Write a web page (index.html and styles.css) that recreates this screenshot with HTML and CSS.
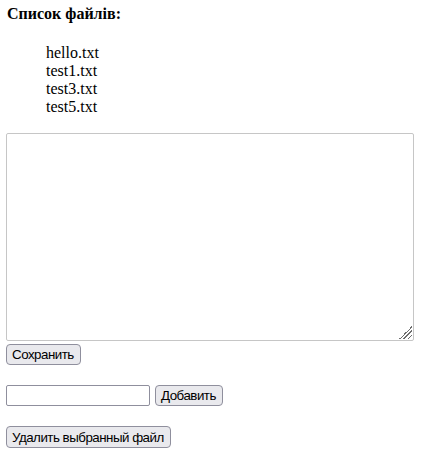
FILE: index.html
```html
<!DOCTYPE html>
<html lang="ru">
<head>
<meta charset="utf-8">
<title>Файлы</title>
<link rel="stylesheet" href="styles.css">
</head>
<body>
<div class="title">Список файлів:</div>
<ul class="files">
  <li>hello.txt</li>
  <li>test1.txt</li>
  <li>test3.txt</li>
  <li>test5.txt</li>
</ul>
<div class="editor">
  <textarea class="content"></textarea>
  <div class="row"><button class="btn">Сохранить</button></div>
</div>
<div class="row add"><input class="name" type="text"><button class="btn">Добавить</button></div>
<div class="row del"><button class="btn">Удалить выбранный файл</button></div>
</body>
</html>
```

FILE: styles.css
```css
html, body {
  background: #ffffff;
}
body {
  margin: 5px 8px 8px 6px;
  font-family: "Liberation Serif", "Times New Roman", serif;
  font-size: 16px;
  color: #000;
}
.title {
  font-weight: bold;
  padding-left: 1px;
}
.files {
  list-style: none;
  margin: 21px 0 17px;
  padding-left: 40px;
}
.editor {
  display: flex;
  flex-direction: column;
  align-items: flex-start;
  gap: 3px;
}
.content {
  box-sizing: border-box;
  width: 408px;
  height: 208px;
  margin: 0;
  border: 1px solid #c6c6c6;
  border-radius: 2px;
  resize: none;
  background:
    linear-gradient(135deg, #fff 50%, transparent 50%) right 1px bottom 1px / 13px 13px no-repeat,
    repeating-linear-gradient(135deg, #6e6e6e 0 1px, transparent 1px 3px) right 1px bottom 1px / 13px 13px no-repeat,
    #fff;
}
.row {
  display: flex;
  align-items: center;
  gap: 5px;
}
.add {
  margin-top: 20px;
}
.del {
  margin-top: 20px;
}
.btn {
  font-family: "Liberation Sans", Arial, sans-serif;
  font-size: 13.333px;
  letter-spacing: -0.5px;
  color: #000;
  background: #e9e9ed;
  border: 1px solid #8f8f9d;
  border-radius: 4px;
  padding: 2px 6px 2px 5px;
  height: 21px;
  line-height: 15px;
  margin: 0;
}
.del .btn {
  height: 22px;
}
.name {
  box-sizing: border-box;
  width: 144px;
  height: 21px;
  margin: 0;
  border: 1px solid #8f8f9d;
  border-radius: 2px;
  padding: 1px 2px;
  font-family: "Liberation Sans", Arial, sans-serif;
  font-size: 13.333px;
}
```
